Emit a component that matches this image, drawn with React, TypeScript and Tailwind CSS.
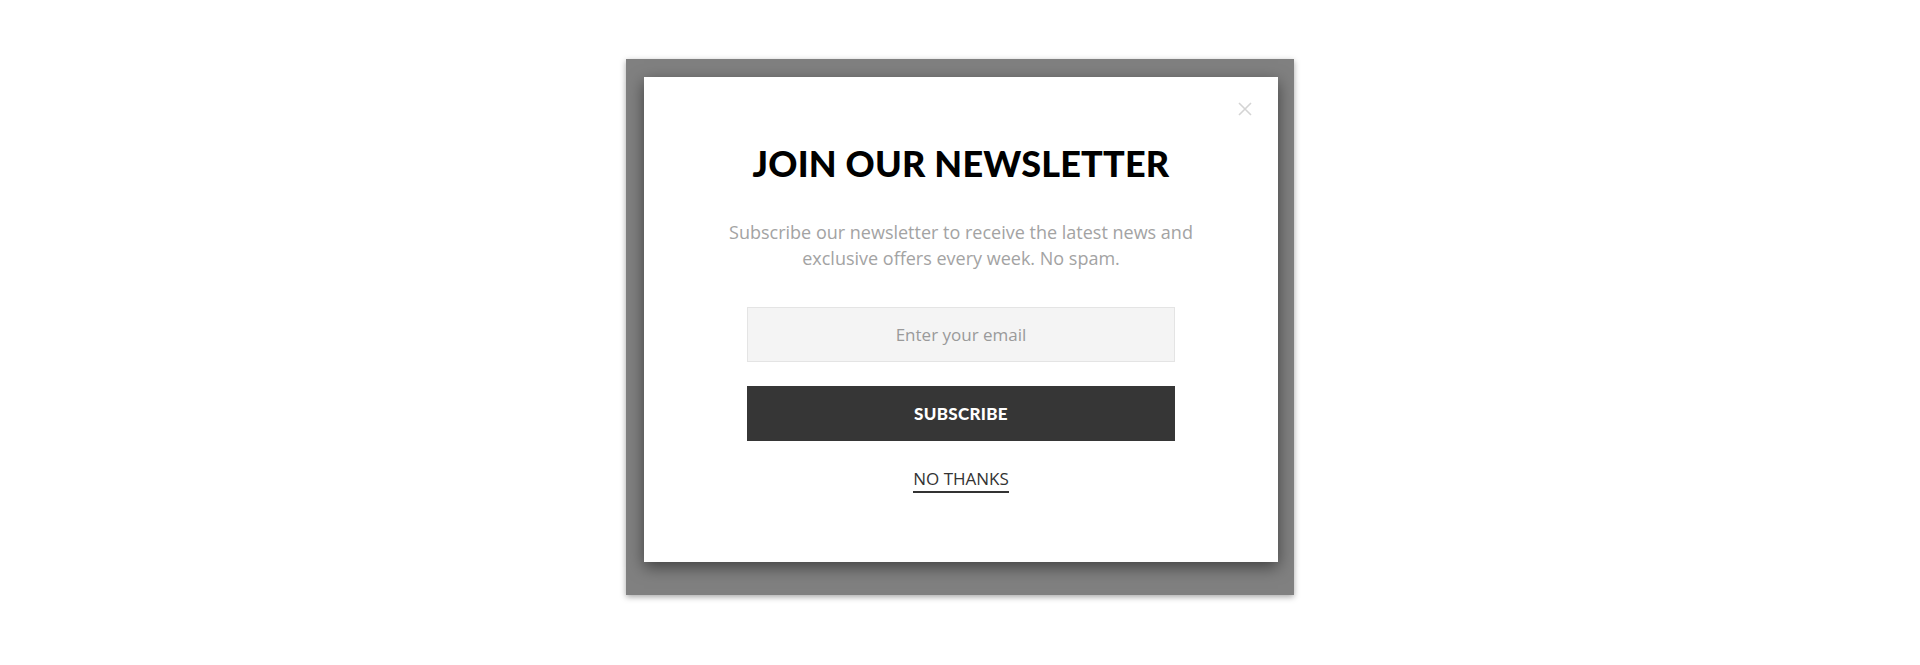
import React from "react";

export default function App() {
  return (
    <div className="w-[1920px] h-[665px] bg-white flex justify-center pt-[59px]" style={{ fontFamily: '"Open Sans", sans-serif' }}>
      <div className="w-[668px] h-[536px] bg-[#808080] pt-[18px] pl-[18px] shadow-[0_2px_6px_rgba(0,0,0,0.35)]">
        <div className="relative w-[634px] h-[485px] bg-white shadow-[0_5px_15px_rgba(0,0,0,0.5)] flex flex-col items-center">
          <button className="absolute right-[25px] top-[24px] w-[16px] h-[16px] flex items-center justify-center">
            <svg width="14" height="14" viewBox="0 0 14 14" fill="none">
              <path d="M1 1L13 13M13 1L1 13" stroke="#d4d4d4" strokeWidth="1.6" />
            </svg>
          </button>
          <h1
            className="mt-[64px] text-[36px] leading-[44px] font-black text-black tracking-[0.2px]"
            style={{ fontFamily: 'Lato, sans-serif' }}
          >
            JOIN OUR NEWSLETTER
          </h1>
          <p className="mt-[34px] text-[18px] leading-[26px] text-[#a3a3a3] text-center w-[500px]">
            Subscribe our newsletter to receive the latest news and exclusive offers every week. No spam.
          </p>
          <input
            type="email"
            placeholder="Enter your email"
            className="mt-[36px] w-[428px] h-[55px] bg-[#f4f4f4] border border-[#e4e4e4] text-center text-[17px] text-[#333] placeholder:text-[#9a9a9a] outline-none"
          />
          <button
            className="mt-[24px] w-[428px] h-[55px] bg-[#363636] text-white text-[17px] font-black tracking-[0.3px]"
            style={{ fontFamily: 'Lato, sans-serif' }}
          >
            SUBSCRIBE
          </button>
          <a className="mt-[27px] text-[17px] leading-[22px] text-[#333] border-b-2 border-[#333] pb-[1px] cursor-pointer">
            NO THANKS
          </a>
        </div>
      </div>
    </div>
  );
}
